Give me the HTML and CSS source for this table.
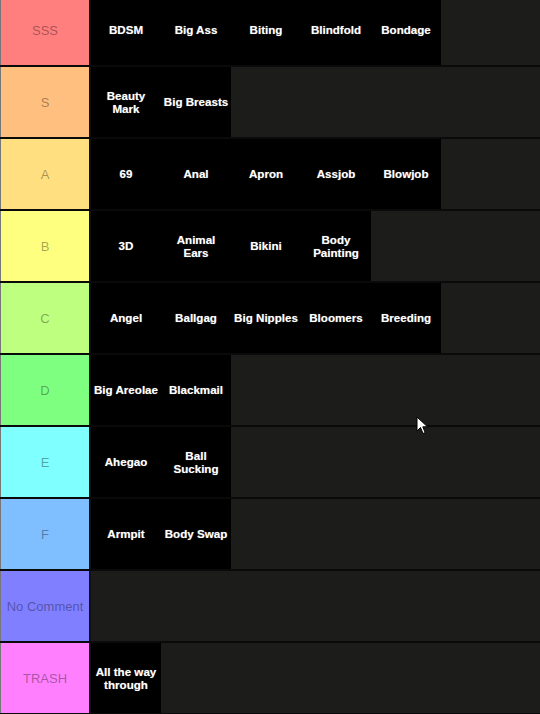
FILE: index.html
```html
<!DOCTYPE html>
<html>
<head>
<meta charset="utf-8">
<link rel="stylesheet" href="styles.css">
</head>
<body>
<div class="board">
  <div class="row"><div class="label t-sss">SSS</div><div class="items">
    <div class="item">BDSM</div><div class="item">Big Ass</div><div class="item">Biting</div><div class="item">Blindfold</div><div class="item">Bondage</div>
  </div></div>
  <div class="row"><div class="label t-s">S</div><div class="items">
    <div class="item">Beauty<br>Mark</div><div class="item">Big Breasts</div>
  </div></div>
  <div class="row"><div class="label t-a">A</div><div class="items">
    <div class="item">69</div><div class="item">Anal</div><div class="item">Apron</div><div class="item">Assjob</div><div class="item">Blowjob</div>
  </div></div>
  <div class="row"><div class="label t-b">B</div><div class="items">
    <div class="item">3D</div><div class="item">Animal<br>Ears</div><div class="item">Bikini</div><div class="item">Body<br>Painting</div>
  </div></div>
  <div class="row"><div class="label t-c">C</div><div class="items">
    <div class="item">Angel</div><div class="item">Ballgag</div><div class="item">Big Nipples</div><div class="item">Bloomers</div><div class="item">Breeding</div>
  </div></div>
  <div class="row"><div class="label t-d">D</div><div class="items">
    <div class="item">Big Areolae</div><div class="item">Blackmail</div>
  </div></div>
  <div class="row"><div class="label t-e">E</div><div class="items">
    <div class="item">Ahegao</div><div class="item">Ball<br>Sucking</div>
  </div></div>
  <div class="row"><div class="label t-f">F</div><div class="items">
    <div class="item">Armpit</div><div class="item">Body Swap</div>
  </div></div>
  <div class="row"><div class="label t-nc">No Comment</div><div class="items"></div></div>
  <div class="row"><div class="label t-trash">TRASH</div><div class="items">
    <div class="item">All the way<br>through</div>
  </div></div>
</div>
<svg class="cursor" width="14" height="20" viewBox="0 0 14 20">
  <path d="M1 1 L1 15 L4.5 11.5 L7 17.5 L9.2 16.6 L6.8 10.8 L11.5 10.8 Z" fill="#fff" stroke="#000" stroke-width="1" stroke-linejoin="round"/>
</svg>
</body>
</html>
```
FILE: styles.css
```css
html, body {
  margin: 0;
  padding: 0;
  background: #1c1c1a;
  overflow: hidden;
}
body {
  width: 540px;
  height: 714px;
  position: relative;
  font-family: "Liberation Sans", Arial, sans-serif;
}
.board {
  margin-top: -5px;
  display: flex;
  flex-direction: column;
}
.row {
  display: flex;
  height: 70px;
  border-bottom: 2px solid #0a0a0a;
  background: #1c1c1a;
}
.label {
  width: 88px;
  flex: none;
  border-left: 1px solid #777;
  border-right: 2px solid #111;
  display: flex;
  align-items: center;
  justify-content: center;
  text-align: center;
  font-size: 13px;
  padding-top: 1px;
  box-sizing: border-box;
  width: 91px;
  color: rgba(0, 0, 0, 0.36);
}
.t-sss { background: #ff7f7f; }
.t-s { background: #ffbf7f; }
.t-a { background: #ffdf7f; }
.t-b { background: #ffff7f; }
.t-c { background: #bfff7f; }
.t-d { background: #7fff7f; }
.t-e { background: #7fffff; }
.t-f { background: #7fbfff; }
.t-nc { background: #7f7fff; }
.t-trash { background: #ff7fff; }
.items {
  display: flex;
}
.item {
  width: 70px;
  height: 70px;
  background: #000;
  color: #fff;
  font-weight: bold;
  font-size: 11.6px;
  line-height: 13px;
  display: flex;
  align-items: center;
  justify-content: center;
  text-align: center;
  white-space: nowrap;
  padding-bottom: 1px;
  box-sizing: border-box;
  text-shadow: 0 0 1px rgba(200, 200, 200, 0.6);
}
.cursor {
  position: absolute;
  left: 416px;
  top: 416px;
}
```
